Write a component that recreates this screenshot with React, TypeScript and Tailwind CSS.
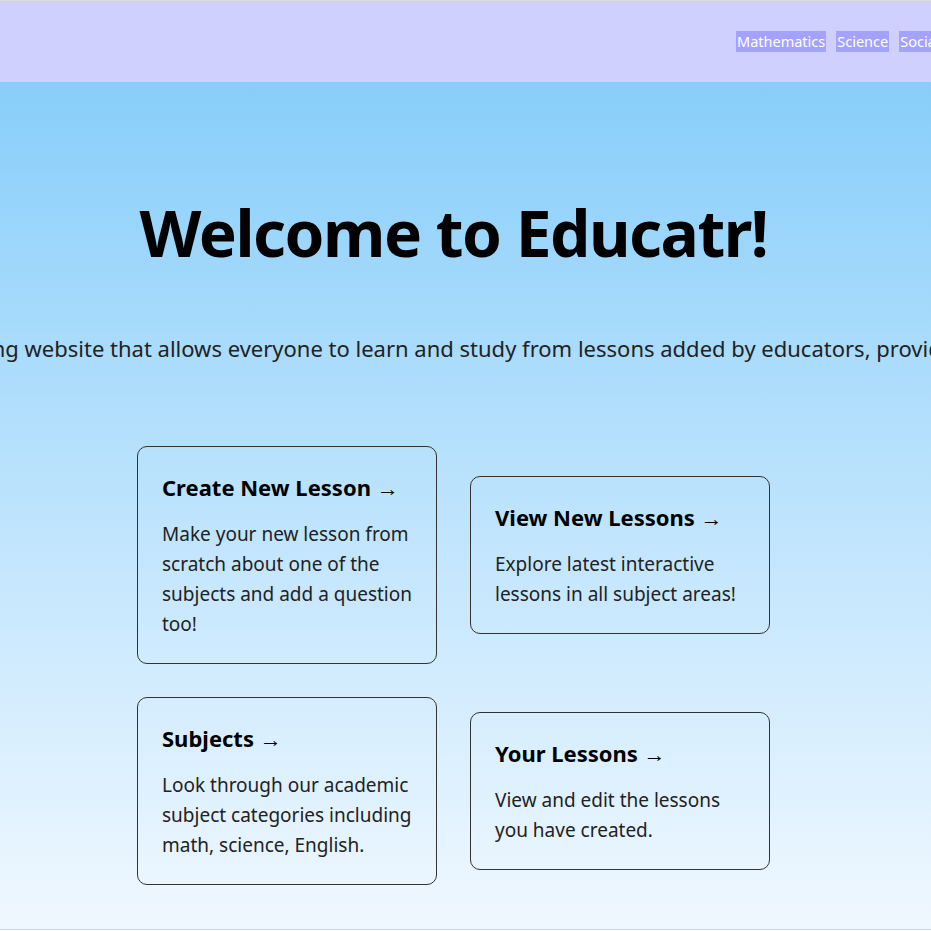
const cards = [
  [
    {
      title: "Create New Lesson →",
      text: "Make your new lesson from scratch about one of the subjects and add a question too!",
    },
    {
      title: "View New Lessons →",
      text: "Explore latest interactive lessons in all subject areas!",
    },
  ],
  [
    {
      title: "Subjects →",
      text: "Look through our academic subject categories including math, science, English.",
    },
    {
      title: "Your Lessons →",
      text: "View and edit the lessons you have created.",
    },
  ],
]

const subjects = ["Mathematics", "Science", "Social Studies", "English"]

export default function App() {
  return (
    <div className="w-[931px] h-[931px] overflow-hidden font-['Noto_Sans',sans-serif] text-black">
      <header className="h-[82px] border-t border-[#dcdcdc] bg-[#d0d0ff] flex items-center pl-[736px]">
        <nav className="flex gap-[10px] whitespace-nowrap">
          {subjects.map((s) => (
            <a key={s} className="bg-[#a3a3ff] text-white text-[14.5px] leading-[21px] px-[1px]">
              {s}
            </a>
          ))}
        </nav>
      </header>
      <main className="h-[848px] bg-gradient-to-b from-[#87cefa] to-[#f0f8ff] border-b border-[#c8d8ec] pr-[24px] flex flex-col items-center">
        <h1 className="mt-[111px] text-[64px] leading-[80px] tracking-[-1.5px] font-bold whitespace-nowrap">
          Welcome to Educatr!
        </h1>
        <div className="mt-[60px] w-full flex justify-center">
          <p className="whitespace-nowrap text-[22px] leading-[30px] text-[#222]">
            Educatr is a learning website that allows everyone to learn and study from lessons added by educators, providing knowledge.
          </p>
        </div>
        <div className="mt-[83px] flex flex-col gap-[33px]">
          {cards.map((row, i) => (
            <div key={i} className="flex items-center gap-[33px]">
              {row.map((c) => (
                <div key={c.title} className="w-[300px] border border-[#333] rounded-[10px] px-[24px] pt-[25px] pb-[24px]">
                  <h2 className="text-[22px] leading-[30px] font-bold">{c.title}</h2>
                  <p className="mt-[17px] text-[19px] leading-[30px] text-[#222]">{c.text}</p>
                </div>
              ))}
            </div>
          ))}
        </div>
      </main>
    </div>
  )
}
